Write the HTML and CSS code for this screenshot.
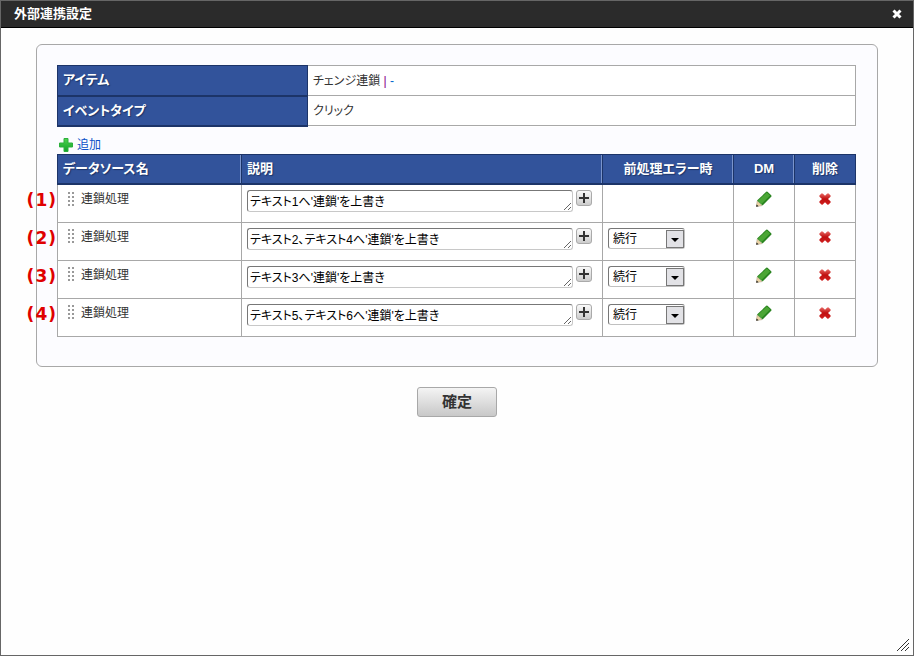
FILE: index.html
```html
<!DOCTYPE html>
<html lang="ja">
  <head>
    <meta charset="utf-8">
    <title>外部連携設定</title>
    <link rel="stylesheet" href="styles.css">
  </head>
  <body>
    <svg class="defs" width="0" height="0" aria-hidden="true">
      <defs>
        <linearGradient id="green" x1="0" y1="0" x2="0" y2="1">
          <stop offset="0" stop-color="#4fd44f" />
          <stop offset="1" stop-color="#12a02a" />
        </linearGradient>
        <linearGradient id="red" x1="0" y1="0" x2="0" y2="1">
          <stop offset="0" stop-color="#e86a66" />
          <stop offset="0.5" stop-color="#c01010" />
          <stop offset="1" stop-color="#d02020" />
        </linearGradient>
        <symbol id="pencil" viewBox="0 0 16 16">
          <path d="M0.4 15.6 L1.2 10 L6 14.6 Z" fill="#ecd3a4" stroke="#a89878" stroke-width="0.5" />
          <path d="M0.2 15.8 L0.5 13.4 L2.6 15.3 Z" fill="#222" />
          <path d="M1 9.6 L10.2 0.8 Q11 0.2 11.8 0.9 L15.2 4.2 Q15.8 5 15.2 5.8 L6.6 14.6 Z" fill="#2a8420" />
          <path d="M2 9.8 L10.8 1.4 L14 4.5 L5.4 13 Z" fill="#4ba635" />
        </symbol>
        <symbol id="cross" viewBox="0 0 12 12">
          <path d="M0.4 2.4 L2.4 0.4 Q3.2 0 4 0.8 L6 2.8 L8 0.8 Q8.8 0 9.6 0.4 L11.6 2.4 Q12 3.2 11.2 4 L9 6 L11.2 8 Q12 8.8 11.6 9.6 L9.6 11.6 Q8.8 12 8 11.2 L6 9.2 L4 11.2 Q3.2 12 2.4 11.6 L0.4 9.6 Q0 8.8 0.8 8 L3 6 L0.8 4 Q0 3.2 0.4 2.4 Z" fill="url(#red)" />
        </symbol>
        <symbol id="plus" viewBox="0 0 10 10">
          <path d="M5 0V10M0 5H10" stroke="#333" stroke-width="2" />
        </symbol>
        <symbol id="arrow" viewBox="0 0 18 18">
          <rect x="0.5" y="0.5" width="17" height="17" fill="#e2e2e6" stroke="#777" />
          <path d="M5 8H13L9 12Z" fill="#000" />
        </symbol>
        <symbol id="handle" viewBox="0 0 8 15">
          <path d="M2 0V14M6 0V14" stroke="#999" stroke-width="2" stroke-dasharray="2 2" />
        </symbol>
      </defs>
    </svg>

    <div class="dialog">
      <header class="titlebar">
        <h1>外部連携設定</h1>
        <button type="button" class="close" aria-label="閉じる">
          <svg width="10" height="10" viewBox="0 0 10 10"><path d="M1.5 1.5L8.5 8.5M8.5 1.5L1.5 8.5" stroke="#fff" stroke-width="3" /></svg>
        </button>
      </header>

      <form class="content">
        <div class="panel">
          <table class="info">
            <tr>
              <th scope="row">アイテム</th>
              <td>チェンジ連鎖 <span class="bar">|</span> <span class="dash">-</span></td>
            </tr>
            <tr>
              <th scope="row">イベントタイプ</th>
              <td>クリック</td>
            </tr>
          </table>

          <a href="#" class="add">
            <svg width="14" height="14" viewBox="0 0 14 14"><path d="M5 0.5H9V5H13.5V9H9V13.5H5V9H0.5V5H5Z" fill="url(#green)" stroke="#2cb03c" /></svg>
            追加
          </a>

          <table class="sources">
            <thead>
              <tr>
                <th scope="col" class="col-name">データソース名</th>
                <th scope="col">説明</th>
                <th scope="col" class="col-error">前処理エラー時</th>
                <th scope="col" class="col-icon">DM</th>
                <th scope="col" class="col-icon">削除</th>
              </tr>
            </thead>
            <tbody>
              <tr>
                <td>
                  <div class="name"><span class="callout">(<b>1</b>)</span><svg class="handle" width="8" height="15"><use href="#handle" /></svg>連鎖処理</div>
                </td>
                <td>
                  <div class="desc">
                    <textarea rows="1" aria-label="説明 1">テキスト1へ'連鎖'を上書き</textarea>
                    <button type="button" class="expand" aria-label="広げる"><svg width="10" height="10"><use href="#plus" /></svg></button>
                  </div>
                </td>
                <td></td>
                <td><button type="button" class="icon" aria-label="編集"><svg width="16" height="16"><use href="#pencil" /></svg></button></td>
                <td><button type="button" class="icon" aria-label="削除"><svg width="12" height="12"><use href="#cross" /></svg></button></td>
              </tr>
              <tr>
                <td>
                  <div class="name"><span class="callout">(<b>2</b>)</span><svg class="handle" width="8" height="15"><use href="#handle" /></svg>連鎖処理</div>
                </td>
                <td>
                  <div class="desc">
                    <textarea rows="1" aria-label="説明 2">テキスト2、テキスト4へ'連鎖'を上書き</textarea>
                    <button type="button" class="expand" aria-label="広げる"><svg width="10" height="10"><use href="#plus" /></svg></button>
                  </div>
                </td>
                <td>
                  <div class="select">
                    <select aria-label="前処理エラー時 2"><option>続行</option><option>中断</option></select>
                    <svg width="18" height="18"><use href="#arrow" /></svg>
                  </div>
                </td>
                <td><button type="button" class="icon" aria-label="編集"><svg width="16" height="16"><use href="#pencil" /></svg></button></td>
                <td><button type="button" class="icon" aria-label="削除"><svg width="12" height="12"><use href="#cross" /></svg></button></td>
              </tr>
              <tr>
                <td>
                  <div class="name"><span class="callout">(<b>3</b>)</span><svg class="handle" width="8" height="15"><use href="#handle" /></svg>連鎖処理</div>
                </td>
                <td>
                  <div class="desc">
                    <textarea rows="1" aria-label="説明 3">テキスト3へ'連鎖'を上書き</textarea>
                    <button type="button" class="expand" aria-label="広げる"><svg width="10" height="10"><use href="#plus" /></svg></button>
                  </div>
                </td>
                <td>
                  <div class="select">
                    <select aria-label="前処理エラー時 3"><option>続行</option><option>中断</option></select>
                    <svg width="18" height="18"><use href="#arrow" /></svg>
                  </div>
                </td>
                <td><button type="button" class="icon" aria-label="編集"><svg width="16" height="16"><use href="#pencil" /></svg></button></td>
                <td><button type="button" class="icon" aria-label="削除"><svg width="12" height="12"><use href="#cross" /></svg></button></td>
              </tr>
              <tr>
                <td>
                  <div class="name"><span class="callout">(<b>4</b>)</span><svg class="handle" width="8" height="15"><use href="#handle" /></svg>連鎖処理</div>
                </td>
                <td>
                  <div class="desc">
                    <textarea rows="1" aria-label="説明 4">テキスト5、テキスト6へ'連鎖'を上書き</textarea>
                    <button type="button" class="expand" aria-label="広げる"><svg width="10" height="10"><use href="#plus" /></svg></button>
                  </div>
                </td>
                <td>
                  <div class="select">
                    <select aria-label="前処理エラー時 4"><option>続行</option><option>中断</option></select>
                    <svg width="18" height="18"><use href="#arrow" /></svg>
                  </div>
                </td>
                <td><button type="button" class="icon" aria-label="編集"><svg width="16" height="16"><use href="#pencil" /></svg></button></td>
                <td><button type="button" class="icon" aria-label="削除"><svg width="12" height="12"><use href="#cross" /></svg></button></td>
              </tr>
            </tbody>
          </table>
        </div>

        <button type="submit" class="submit">確定</button>
      </form>

      <svg class="grip" width="12" height="12" viewBox="0 0 12 12"><path d="M0 12L12 0M4 12L12 4M8 12L12 8" stroke="#333" stroke-width="1" /></svg>
    </div>
  </body>
</html>
```

FILE: styles.css
```css
:root {
  --blue: #32539b;
  --blue-light: #7a94cc;
  --blue-dark: #1c3468;
  --line: #a8a8a8;
  --text: #333;
}

* {
  margin: 0;
  padding: 0;
  box-sizing: border-box;
}

body,
button,
select,
textarea {
  font-family: "Liberation Sans", "Noto Sans CJK JP", sans-serif;
  font-size: 12px;
  font-feature-settings: "palt";
  color: var(--text);
}

.defs {
  position: absolute;
}

.dialog {
  position: relative;
  min-height: 100vh;
  border: 1px solid #666;
  background: #fefefe;
}

.titlebar {
  display: flex;
  align-items: center;
  justify-content: space-between;
  height: 27px;
  padding: 0 11px 0 13px;
  background: #2b2b2b;
  border-bottom: 1px solid #000;
}

.titlebar h1 {
  font-size: 13px;
  line-height: 18px;
  color: #fff;
}

.close,
.icon {
  display: block;
  background: none;
  border: none;
  cursor: pointer;
}

.close svg,
.icon svg,
.expand svg {
  display: block;
}

.content {
  padding: 16px 35px;
}

.panel {
  padding: 20px 21px 29px 20px;
  background: #fcfcff;
  border: 1px solid var(--line);
  border-radius: 6px;
}

table {
  width: 100%;
  border-collapse: collapse;
  table-layout: fixed;
  background: #fff;
}

th {
  height: 30px;
  padding: 0 5px;
  font-size: 13px;
  line-height: 18px;
  text-align: left;
  color: #fff;
  background: var(--blue);
  border: 1px solid var(--blue-dark);
  text-shadow: 1px 1px 1px var(--blue-dark);
}

td {
  padding: 5px;
  border: 1px solid var(--line);
  line-height: 18px;
}

.info th {
  width: 250px;
  border-bottom-width: 2px;
}

.info td {
  padding: 0 5px;
}

.bar {
  color: #808;
}

.dash {
  color: #06c;
}

.add {
  display: flex;
  align-items: center;
  gap: 4px;
  width: max-content;
  margin: 9px 0 0 2px;
  line-height: 18px;
  color: #0b50c8;
  text-decoration: none;
}

.sources th {
  border-bottom-width: 2px;
}

.sources th:not(:last-child) {
  box-shadow: inset -1px 0 var(--blue-light);
}

.sources td {
  height: 38px;
  vertical-align: top;
}

.sources .col-name {
  width: 184px;
}

.sources .col-error {
  width: 131px;
  text-align: center;
}

.sources .col-icon {
  width: 61px;
  text-align: center;
}

.name {
  position: relative;
  display: flex;
  align-items: center;
  gap: 6px;
  padding-left: 4px;
}

/* step numbers hang over the left edge of the panel */
.callout {
  position: absolute;
  top: 1px;
  right: 100%;
  margin-right: 7px;
  font-family: "DejaVu Sans", sans-serif;
  font-size: 17px;
  font-weight: bold;
  color: #e00000;
}

.callout b {
  padding: 0 1px;
}

.desc {
  display: flex;
  align-items: flex-start;
  gap: 3px;
  padding-right: 5px;
}

textarea {
  flex: 1;
  min-width: 0;
  height: 22px;
  padding: 2px 2px 0;
  line-height: 18px;
  color: #000;
  background: #fff;
  border: 1px solid #c8c8c8;
  border-top-color: #777;
  border-left-color: #777;
  border-radius: 3px;
  overflow: hidden;
  resize: vertical;
}

.expand {
  display: flex;
  align-items: center;
  justify-content: center;
  width: 16px;
  height: 16px;
  background: linear-gradient(#fafafa, #ccc);
  border: 1px solid #aaa;
  border-radius: 3px;
}

.select {
  position: relative;
  width: 77px;
}

select {
  display: block;
  width: 100%;
  height: 21px;
  padding: 2px 4px 0;
  color: #000;
  background: #fff;
  border: 1px solid #c0c0c0;
  border-top-color: #777;
  border-left-color: #777;
  border-radius: 3px;
  appearance: none;
}

.select svg {
  position: absolute;
  top: 2px;
  right: 1px;
  pointer-events: none;
}

.icon {
  display: flex;
  align-items: center;
  justify-content: center;
  height: 18px;
  margin: 0 auto;
}

.submit {
  display: block;
  width: 80px;
  height: 30px;
  margin: 20px auto 0;
  padding-bottom: 2px;
  font-size: 15px;
  font-weight: bold;
  background: linear-gradient(#f4f4f4, #c8c8c8);
  border: 1px solid var(--line);
  border-radius: 3px;
}

.grip {
  position: absolute;
  right: 4px;
  bottom: 4px;
}
```
